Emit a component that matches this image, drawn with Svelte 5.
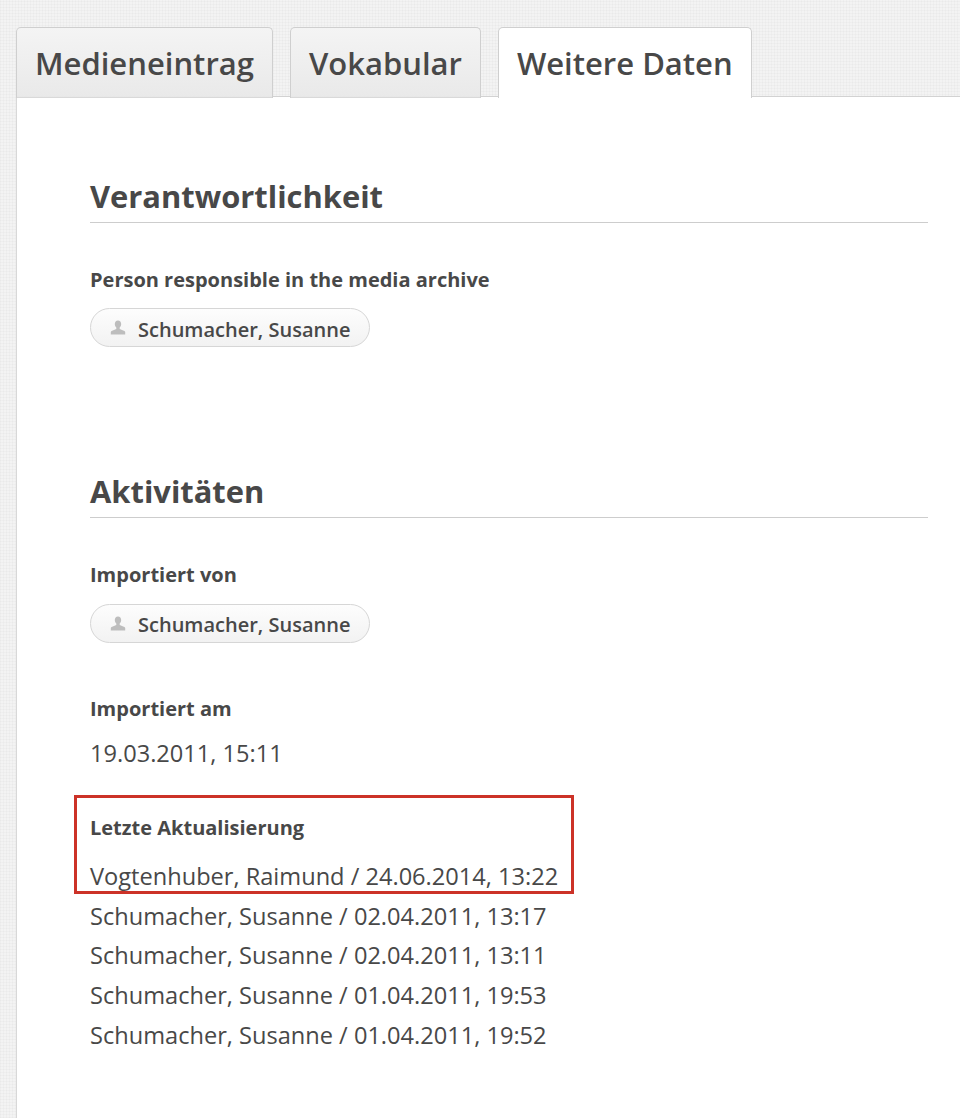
<script>
  const tabs = [
    { label: 'Medieneintrag', active: false },
    { label: 'Vokabular', active: false },
    { label: 'Weitere Daten', active: true }
  ];
  const updates = [
    'Vogtenhuber, Raimund / 24.06.2014, 13:22',
    'Schumacher, Susanne / 02.04.2011, 13:17',
    'Schumacher, Susanne / 02.04.2011, 13:11',
    'Schumacher, Susanne / 01.04.2011, 19:53',
    'Schumacher, Susanne / 01.04.2011, 19:52'
  ];
</script>

{#snippet person(name)}
  <div class="pill">
    <svg class="icon" viewBox="0 0 16 16" aria-hidden="true">
      <path d="M8 0.500c-2 0-3.200 1.500-3.200 3.600 0 1.500.6 2.800 1.500 3.500v1.500L1.600 10.900c-.5.2-.8.600-.8 1.100v2.500h14.400V12c0-.5-.3-.9-.8-1.100L9.700 9.100V7.600c.9-.7 1.500-2 1.500-3.500C11.200 2 10 .5 8 .5z" />
    </svg>
    <span>{name}</span>
  </div>
{/snippet}

<div class="page">
  <nav class="tabs">
    {#each tabs as tab}
      <div class="tab" class:active={tab.active}>{tab.label}</div>
    {/each}
  </nav>
  <main class="panel">
    <section class="first">
      <h2>Verantwortlichkeit</h2>
      <h3 class="resp">Person responsible in the media archive</h3>
      {@render person('Schumacher, Susanne')}
    </section>
    <section class="second">
      <h2>Aktivitäten</h2>
      <h3 class="imp">Importiert von</h3>
      {@render person('Schumacher, Susanne')}
      <h3 class="am">Importiert am</h3>
      <p class="date">19.03.2011, 15:11</p>
      <div class="updates">
        <h3>Letzte Aktualisierung</h3>
        <div class="list">
          {#each updates as u}
            <p>{u}</p>
          {/each}
        </div>
        <div class="mark"></div>
      </div>
    </section>
  </main>
</div>

<style>
  :global(body) {
    margin: 0;
    background: #f2f2f2;
  }
  .page {
    height: 1118px;
    overflow: hidden;
    padding-top: 27px;
    box-sizing: border-box;
    font-family: "Open Sans", "Liberation Sans", sans-serif;
    color: #484848;
    background-color: #f3f3f3;
    background-image:
      repeating-linear-gradient(90deg, rgba(0, 0, 0, 0.018) 0 1px, transparent 1px 3px),
      repeating-linear-gradient(0deg, rgba(0, 0, 0, 0.018) 0 1px, transparent 1px 3px);
  }
  .tabs {
    display: flex;
    gap: 17px;
    padding-left: 16px;
    position: relative;
    z-index: 1;
    height: 71px;
  }
  .tab {
    box-sizing: border-box;
    height: 71px;
    padding: 14px 18px 0;
    font-size: 31px;
    line-height: 42px;
    font-weight: 600;
    white-space: nowrap;
    border: 1px solid #cfcfcf;
    border-bottom: 0;
    border-radius: 5px 5px 0 0;
    background: linear-gradient(#f4f4f4, #e9e9e9);
    box-shadow: inset 0 -2px 1px -1px #d8d8d8;
  }
  .tab.active {
    background: #fff;
    box-shadow: none;
  }
  .panel {
    margin-left: 16px;
    margin-top: -2px;
    border-top: 1px solid #d2d2d2;
    border-left: 1px solid #d8d8d8;
    background: #fff;
    height: 1030px;
    padding: 0 32px 0 73px;
  }
  h2 {
    margin: 0;
    font-size: 30.9px;
    line-height: 44px;
    font-weight: 700;
    padding-bottom: 4px;
    border-bottom: 1px solid #cdcdcd;
  }
  h3 {
    margin: 0;
    font-size: 20px;
    line-height: 28px;
    font-weight: 700;
  }
  .first {
    padding-top: 77px;
  }
  .resp {
    margin-top: 43px;
  }
  .second {
    padding-top: 122px;
  }
  .imp {
    margin-top: 43px;
  }
  .pill {
    display: flex;
    align-items: center;
    box-sizing: border-box;
    width: 280px;
    height: 39px;
    margin-top: 14px;
    padding: 2px 0 0 19px;
    border: 1px solid #d6d6d6;
    border-radius: 20px;
    background: linear-gradient(#fdfdfd, #f2f2f2);
    font-size: 20px;
    font-weight: 600;
    white-space: nowrap;
  }
  .first .pill {
    padding-top: 4px;
  }
  .second .pill {
    margin-top: 15px;
  }
  .icon {
    width: 16px;
    height: 16px;
    margin-right: 12px;
    margin-top: -2px;
    fill: #bdbdbd;
  }
  .first .icon {
    margin-top: -4px;
  }
  .am {
    margin-top: 52px;
  }
  p {
    margin: 0;
    font-size: 23.6px;
    line-height: 39.75px;
    white-space: nowrap;
  }
  .date {
    margin-top: 11px;
  }
  .updates {
    position: relative;
    margin-top: 40px;
  }
  .list {
    margin-top: 15px;
  }
  .mark {
    position: absolute;
    left: -16px;
    top: -19px;
    width: 500px;
    height: 99px;
    box-sizing: border-box;
    border: 3px solid #cc3228;
    pointer-events: none;
  }
</style>
